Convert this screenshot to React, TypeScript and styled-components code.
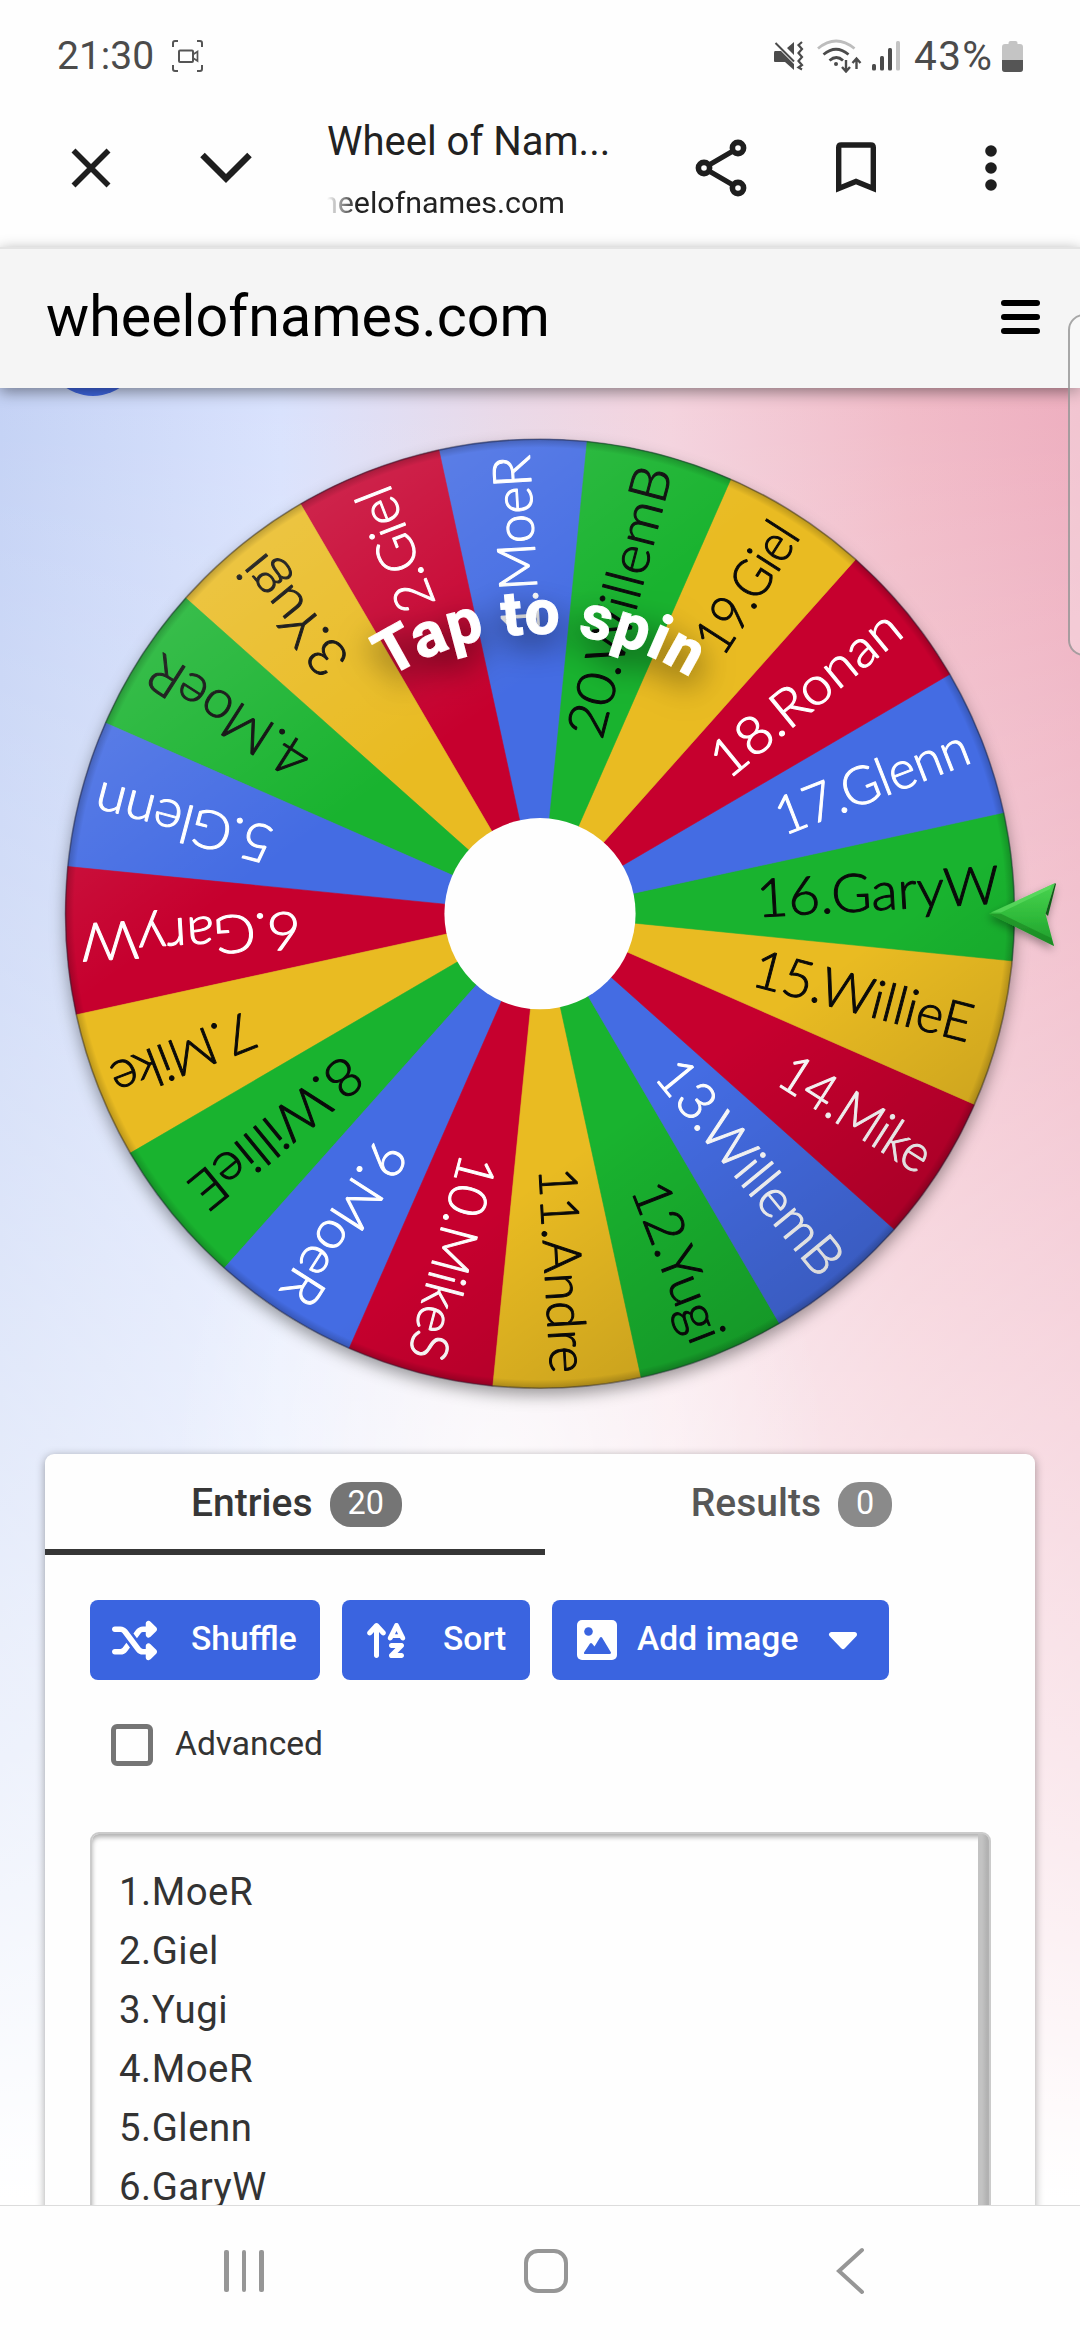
import React from "react";
import styled, { createGlobalStyle } from "styled-components";
import { FaArrowUpAZ, FaShuffle } from "react-icons/fa6";

const GlobalStyle = createGlobalStyle`
  *, *::before, *::after { box-sizing: border-box; }
  body { margin: 0; background: #fdfdfd; font-family: Roboto, "Liberation Sans", sans-serif; }
`;

const Page = styled.div`
  position: relative;
  display: flex;
  flex-direction: column;
  width: 1080px;
  height: 2340px;
  overflow: hidden;
  background: #fefefe;
`;

/* ---------- status bar ---------- */

const StatusBar = styled.div`
  display: flex;
  align-items: center;
  height: 111px;
  padding: 0 56px 0 57px;
  color: #4b4b4b;
`;

const StatusText = styled.span<{ $width: number; $wide?: boolean }>`
  width: ${(p) => p.$width}px;
  font-size: ${(p) => (p.$wide ? 40.5 : 39)}px;
  letter-spacing: ${(p) => (p.$wide ? 1.4 : 0)}px;
  font-weight: 400;
  line-height: 48px;
  white-space: nowrap;
`;

const StatusIcons = styled.div`
  display: flex;
  align-items: center;
  margin-left: auto;
`;

const StatusIcon = styled.svg<{ $left?: number }>`
  display: block;
  flex: none;
  margin-left: ${(p) => p.$left ?? 0}px;
`;

/* ---------- browser toolbar ---------- */

const Toolbar = styled.div`
  display: flex;
  align-items: center;
  height: 136px;
  padding: 0 22px 22px 23px;
`;

const ToolButton = styled.button`
  display: flex;
  align-items: center;
  justify-content: center;
  width: 135px;
  height: 100px;
  padding: 0;
  border: 0;
  background: none;
`;

const PageInfo = styled.div`
  flex: 1;
  display: flex;
  flex-direction: column;
  gap: 19px;
  padding: 3px 0 0 34px;
  color: #222;
  white-space: nowrap;
`;

const PageTitle = styled.div`
  font-size: 40px;
  line-height: 48px;
`;

const PageHost = styled.div`
  width: 270px;
  overflow: hidden;
  font-size: 30.4px;
  line-height: 36px;
  mask-image: linear-gradient(90deg, transparent 0, #000 30px);

  span { margin-left: -6px; }
`;

/* ---------- site header ---------- */

const SiteHeader = styled.header`
  position: relative;
  z-index: 2;
  display: flex;
  align-items: center;
  justify-content: space-between;
  height: 141px;
  padding: 0 40px 3px 46px;
  border-top: 2px solid #e4e4e4;
  background: #f5f5f5;
  box-shadow: 0 4px 14px rgba(0, 0, 0, 0.42);
`;

const SiteName = styled.div`
  font-size: 57.4px;
  line-height: 70px;
  color: #000;
`;

const Burger = styled.div`
  display: flex;
  flex-direction: column;
  gap: 8px;
  width: 39px;

  i { height: 6px; border-radius: 3px; background: #000; }
`;

const EdgeHandle = styled.div`
  position: absolute;
  z-index: 3;
  left: 1068px;
  top: 314px;
  width: 40px;
  height: 342px;
  border: 2px solid rgba(140, 140, 140, 0.75);
  border-radius: 16px;
  background: rgba(255, 255, 255, 0.28);
`;

/* ---------- wheel area ---------- */

const Stage = styled.main`
  position: relative;
  height: 1817px;
  overflow: hidden;
  background:
    radial-gradient(ellipse 330px 420px at 500px 1080px, rgba(255, 255, 255, 0.7), rgba(255, 255, 255, 0) 100%),
    linear-gradient(180deg, rgba(255, 255, 255, 0) 0, rgba(255, 255, 255, 0.24) 500px, rgba(255, 255, 255, 0.54) 1060px, rgba(255, 255, 255, 0.74) 1420px, #fff 1810px),
    linear-gradient(90deg, #c4d2f5 0%, #d9e2fd 26%, #ead9e8 47%, #f4d3de 62%, #f1bbc8 84%, #eeaebf 100%);
`;

const FloatingDot = styled.div`
  position: absolute;
  left: 45px;
  top: -88px;
  width: 96px;
  height: 96px;
  border-radius: 50%;
  background: #3f66e0;
`;

const WheelSvg = styled.svg`
  display: block;
  width: 1080px;
  height: 1066px;
`;

const Label = styled.text`
  font-family: Lato, "Open Sans", sans-serif;
  font-weight: 300;
  font-size: 53px;
`;

const SpinHint = styled.text`
  font-family: Roboto, sans-serif;
  font-weight: 700;
  font-size: 62px;
  fill: #fff;
  stroke: #fff;
  stroke-width: 1px;
`;

/* ---------- entries card ---------- */

const Card = styled.section`
  width: 990px;
  height: 900px;
  margin-left: 45px;
  border-radius: 9px;
  background: #fefefe;
  box-shadow: 0 2px 10px rgba(0, 0, 0, 0.35);
  color: #333;
`;

const Tabs = styled.div`
  display: flex;
`;

const Tab = styled.div<{ $active?: boolean }>`
  display: flex;
  align-items: center;
  justify-content: center;
  gap: 17px;
  width: ${(p) => (p.$active ? 500 : 490)}px;
  height: 101px;
  padding: 5px 0 0 3px;
  border-bottom: 6px solid ${(p) => (p.$active ? "#363636" : "transparent")};
  color: ${(p) => (p.$active ? "#363636" : "#575757")};
  font-size: 39px;
  font-weight: 500;
  line-height: 46px;
`;

const TabName = styled.span`
  padding-bottom: 2px;
`;

const Count = styled.span<{ $dim?: boolean }>`
  height: 45px;
  padding: 0 18px;
  border-radius: 21px;
  background: ${(p) => (p.$dim ? "#8a8a8a" : "#757575")};
  color: #fff;
  font-size: 32.4px;
  font-weight: 400;
  line-height: 42px;
`;

const Actions = styled.div`
  display: flex;
  gap: 22px;
  padding: 45px 0 0 45px;
`;

const ActionButton = styled.button<{ $width: number; $pad: number }>`
  display: flex;
  align-items: center;
  width: ${(p) => p.$width}px;
  height: 80px;
  padding: 0 0 0 ${(p) => p.$pad}px;
  border: 0;
  border-radius: 8px;
  background: #3a64e0;
  color: #fff;
  font: 500 33.6px/40px Roboto, sans-serif;
  white-space: nowrap;

  svg { flex: none; display: block; }
`;

const ActionText = styled.span<{ $left: number }>`
  margin-left: ${(p) => p.$left}px;
  padding-bottom: 3px;
`;

const Caret = styled.svg`
  margin-left: 30px;
`;

const CheckRow = styled.label`
  display: flex;
  align-items: center;
  gap: 22px;
  height: 42px;
  margin: 44px 0 0 66px;
  font-size: 33.6px;
  line-height: 40px;

  span:last-child { padding-bottom: 2px; }
`;

const CheckBox = styled.span`
  width: 42px;
  height: 42px;
  border: 5px solid #757575;
  border-radius: 6px;
`;

const EntryBox = styled.div`
  display: flex;
  justify-content: space-between;
  width: 901px;
  height: 600px;
  margin: 66px 0 0 45px;
  border: 2px solid #cbcbcb;
  border-radius: 9px;
  overflow: hidden;
  box-shadow: inset 0 3px 5px rgba(0, 0, 0, 0.32);
`;

const EntryList = styled.div`
  padding: 28px 0 0 27px;
  font-size: 38.4px;
  line-height: 59px;
  letter-spacing: 0.5px;
`;

const ScrollTrack = styled.div`
  width: 11px;
  background: linear-gradient(90deg, #c3c3c3 0 4px, #b2b2b2 9px);
`;

/* ---------- navigation bar ---------- */

const NavBar = styled.nav`
  position: relative;
  z-index: 4;
  display: flex;
  align-items: center;
  height: 135px;
  padding: 0 0 5px 224px;
  border-top: 1px solid #dcdcdc;
  background: #fefefe;
`;

const Recents = styled.div`
  display: flex;
  justify-content: space-between;
  width: 40px;
  height: 42px;

  i { width: 4.6px; border-radius: 2px; background: #969696; }
`;

const Home = styled.div`
  width: 44px;
  height: 44px;
  margin-left: 260px;
  border: 4px solid #969696;
  border-radius: 14px;
`;

const BackIcon = styled.svg`
  display: block;
  margin-left: 266px;
`;

/* ---------- wheel data ---------- */

const CX = 540;
const CY = 913.7;
const R = 474.5;
const FILLS = ["#446ce3", "#c6002e", "#e9bb22", "#19b32f"];

/* name with the radii at which its label starts and ends */
const ENTRIES: [string, number, number][] = [
  ["1.MoeR", 284, 456],
  ["2.Giel", 330, 454],
  ["3.Yugi", 320, 454],
  ["4.MoeR", 281, 456],
  ["5.Glenn", 279, 456],
  ["6.GaryW", 243, 457],
  ["7.Mike", 311, 456],
  ["8.WillieE", 243, 443],
  ["9.MoeR", 277, 456],
  ["10.MikeS", 253, 457],
  ["11.Andre", 257, 457],
  ["12.Yugi", 293, 456],
  ["13.WillemB", 201, 457],
  ["14.Mike", 292, 456],
  ["15.WillieE", 224, 443],
  ["16.GaryW", 220, 457],
  ["17.Glenn", 258, 456],
  ["18.Ronan", 233, 457],
  ["19.Giel", 317, 456],
  ["20.WillemB", 186, 458],
];

const STEP = 360 / ENTRIES.length;
const FIRST = -93.3;

const point = (deg: number, r: number) => {
  const a = (deg * Math.PI) / 180;
  return `${(CX + r * Math.cos(a)).toFixed(2)} ${(CY + r * Math.sin(a)).toFixed(2)}`;
};

function Wheel() {
  return (
    <WheelSvg viewBox="0 388 1080 1066">
      <defs>
        <linearGradient id="shine" x1="0.2" y1="0.08" x2="0.8" y2="0.92">
          <stop offset="0" stopColor="#fff" stopOpacity="0.15" />
          <stop offset="0.3" stopColor="#fff" stopOpacity="0" />
          <stop offset="0.72" stopColor="#000" stopOpacity="0" />
          <stop offset="1" stopColor="#000" stopOpacity="0.16" />
        </linearGradient>
        <radialGradient id="rim" cx="0.5" cy="0.5" r="0.5">
          <stop offset="0.982" stopColor="#000" stopOpacity="0" />
          <stop offset="1" stopColor="#000" stopOpacity="0.2" />
        </radialGradient>
        <linearGradient id="pin" x1="0" y1="0" x2="0" y2="1">
          <stop offset="0.1" stopColor="#45cf4c" />
          <stop offset="0.55" stopColor="#2fba3a" />
          <stop offset="1" stopColor="#209a2b" />
        </linearGradient>
        <filter id="drop" x="-10%" y="-10%" width="120%" height="120%">
          <feDropShadow dx="0" dy="7" stdDeviation="8" floodColor="#000" floodOpacity="0.38" />
        </filter>
        <filter id="pinDrop" x="-50%" y="-50%" width="200%" height="200%">
          <feDropShadow dx="-1" dy="4" stdDeviation="4" floodColor="#000" floodOpacity="0.35" />
        </filter>
        <filter id="hintDrop" x="-20%" y="-60%" width="140%" height="250%">
          <feDropShadow dx="0" dy="12" stdDeviation="16" floodColor="#000" floodOpacity="0.6" />
        </filter>
        <path id="hintArc" d={`M ${point(-150, 280)} A 280 280 0 0 1 ${point(-30, 280)}`} />
      </defs>

      <circle cx={CX} cy={CY} r={R} fill="#888" filter="url(#drop)" />
      {ENTRIES.map(([name], i) => {
        const mid = FIRST - i * STEP;
        return (
          <path
            key={name}
            d={`M ${CX} ${CY} L ${point(mid - STEP / 2, R)} A ${R} ${R} 0 0 1 ${point(mid + STEP / 2, R)} Z`}
            fill={FILLS[i % 4]}
            stroke={FILLS[i % 4]}
            strokeWidth="0.6"
          />
        );
      })}
      {ENTRIES.map(([name, from, to], i) => (
        <Label
          key={name}
          x={from - 3}
          y={16}
          textLength={to - from + 6}
          lengthAdjust="spacingAndGlyphs"
          fill={i % 4 < 2 ? "#fff" : "#0a0a0a"}
          stroke={i % 4 < 2 ? "#fff" : "#0a0a0a"}
          strokeWidth="1"
          strokeLinejoin="round"
          transform={`translate(${CX} ${CY}) rotate(${FIRST - i * STEP})`}
        >
          {name}
        </Label>
      ))}
      <circle cx={CX} cy={CY} r={R} fill="url(#shine)" />
      <circle cx={CX} cy={CY} r={R} fill="url(#rim)" />
      <circle cx={CX} cy={CY} r={R} fill="none" stroke="#223" strokeOpacity="0.45" strokeWidth="1.6" />
      <circle cx={CX} cy={CY} r="95.6" fill="#fefefe" />

      <g filter="url(#pinDrop)">
        <path d="M989 913.7 L1055 883 L1045.5 913.7 L1054 946 Z" fill="url(#pin)" />
        <path d="M989 913.7 L1054 946 L1051 938 L1001 913.7 Z" fill="#17801f" opacity="0.55" />
        <path d="M1055 883 L1045.5 913.7 L1048 916 L1056 884 Z" fill="#0f5f18" />
        <path d="M991 912.5 L1052 884.5 L1050 889 L1001 912.5 Z" fill="#6be36e" opacity="0.5" />
      </g>

      <SpinHint filter="url(#hintDrop)" textAnchor="middle" textLength="318">
        <textPath href="#hintArc" startOffset="50%">Tap to spin</textPath>
      </SpinHint>
    </WheelSvg>
  );
}

export default function App() {
  return (
    <>
      <GlobalStyle />
      <Page>
        <StatusBar>
          <StatusText $width={97}>21:30</StatusText>
          <StatusIcon $left={18} width="31" height="32" viewBox="0 0 31 32" fill="none" stroke="#555" strokeWidth="2">
            <path d="M1 7V3q0-2 2-2h3M25 1h3q2 0 2 2v4M30 25v4q0 2-2 2h-3M6 31H3q-2 0-2-2v-4" />
            <rect x="7" y="10.5" width="14" height="11.5" rx="1" />
            <path d="M21 14.5l4.500-3v9.500l-4.500-3z" strokeWidth="1.7" />
          </StatusIcon>
          <StatusIcons>
            <StatusIcon width="30" height="31" viewBox="0 0 30 31" fill="#4b4b4b">
              <path d="M1 11h6l13 13v6l-9-8H1q-1 0-1-1v-8q0-2 1-2zM13 8l7-6v13z" />
              <path d="M1.500 3L20 21.500" stroke="#4b4b4b" strokeWidth="2" />
              <path d="M28 2l-3.500 3 3.500 4-3.500 4 3.500 4-3.500 4 3.500 4-3.500 2.500 3.500 2" fill="none" stroke="#4b4b4b" strokeWidth="2.2" />
            </StatusIcon>
            <StatusIcon $left={13} width="46" height="34" viewBox="0 0 46 34" fill="none" stroke="#4b4b4b" strokeWidth="2.8">
              <path d="M1 9.500q18-15 36.500 0" stroke="#bdbdbd" />
              <path d="M6.500 15.500q12.500-10.500 25 0M12.500 21.500q7-6 13.500 0" />
              <circle cx="19" cy="25" r="2" fill="#4b4b4b" stroke="none" />
              <path d="M29 21v11M25 28l4 4.500 4-4.500M39.500 30V20M35.500 24l4-4.500 4 4.500" strokeWidth="2.4" />
            </StatusIcon>
            <StatusIcon $left={9} width="28" height="30" viewBox="0 0 28 30" fill="#4b4b4b">
              <rect x="0" y="23" width="4" height="6.5" rx="1.5" />
              <rect x="8" y="15" width="4" height="14.5" rx="1.5" />
              <rect x="16" y="7" width="4" height="22.5" rx="1.5" />
              <rect x="24" y="0" width="4" height="29.5" rx="1.5" fill="#c4c4c4" />
            </StatusIcon>
            <StatusIcon $left={14} width="0" height="1" />
            <StatusText $width={88} $wide>43%</StatusText>
            <StatusIcon width="22" height="32" viewBox="0 0 22 32">
              <path d="M6.500 3q0-2 2-2h5q2 0 2 2v1H18q3 0 3 3v22q0 3-3 3H3q-3 0-3-3V7q0-3 3-3h3.500z" fill="#c4c4c4" />
              <path d="M0 20h21v9q0 3-3 3H3q-3 0-3-3z" fill="#555" />
            </StatusIcon>
          </StatusIcons>
        </StatusBar>

        <Toolbar>
          <ToolButton>
            <svg width="40" height="42" viewBox="0 0 40 42" stroke="#1e1e1e" strokeWidth="5.6">
              <path d="M2.500 3.500l35 35M37.500 3.500l-35 35" />
            </svg>
          </ToolButton>
          <ToolButton>
            <svg width="52" height="32" viewBox="0 0 52 32" fill="none" stroke="#1e1e1e" strokeWidth="6.4">
              <path d="M2.500 3L26 26.500 49.500 3" />
            </svg>
          </ToolButton>
          <PageInfo>
            <PageTitle>Wheel of Nam...</PageTitle>
            <PageHost>
              <span>heelofnames.com</span>
            </PageHost>
          </PageInfo>
          <ToolButton>
            <svg width="52" height="58" viewBox="0 0 52 58" fill="none" stroke="#1e1e1e" strokeWidth="5.6">
              <circle cx="9" cy="29" r="5.6" />
              <circle cx="43" cy="9" r="5.6" />
              <circle cx="43" cy="49" r="5.6" />
              <path d="M14 26l24-14M14 32l24 14" strokeWidth="5" />
            </svg>
          </ToolButton>
          <ToolButton>
            <svg width="40" height="52" viewBox="0 0 40 52" fill="none" stroke="#1e1e1e" strokeWidth="5.4">
              <path d="M2.700 46.500V5.500q0-2.500 2.500-2.500h29.600q2.500 0 2.500 2.500v41L20 39.500z" />
            </svg>
          </ToolButton>
          <ToolButton>
            <svg width="12" height="46" viewBox="0 0 12 46" fill="#1e1e1e">
              <circle cx="6" cy="6" r="5.8" />
              <circle cx="6" cy="23" r="5.8" />
              <circle cx="6" cy="40" r="5.8" />
            </svg>
          </ToolButton>
        </Toolbar>

        <SiteHeader>
          <SiteName>wheelofnames.com</SiteName>
          <Burger>
            <i />
            <i />
            <i />
          </Burger>
        </SiteHeader>
        <EdgeHandle />

        <Stage>
          <FloatingDot />
          <Wheel />
          <Card>
            <Tabs>
              <Tab $active>
                <TabName>Entries</TabName>
                <Count>20</Count>
              </Tab>
              <Tab>
                <TabName>Results</TabName>
                <Count $dim>0</Count>
              </Tab>
            </Tabs>
            <Actions>
              <ActionButton $width={230} $pad={22}>
                <FaShuffle size={45} />
                <ActionText $left={34}>Shuffle</ActionText>
              </ActionButton>
              <ActionButton $width={188} $pad={22}>
                <FaArrowUpAZ size={45} />
                <ActionText $left={34}>Sort</ActionText>
              </ActionButton>
              <ActionButton $width={337} $pad={25}>
                <svg width="40" height="40" viewBox="0 0 40 40">
                  <rect width="40" height="40" rx="5" fill="#fff" />
                  <circle cx="11.5" cy="11.5" r="4.3" fill="#3a64e0" />
                  <path d="M7 32.500l6-9q1-1 2 0l2.500 3 5.500-9q1-1 2 0l9 15q0 1.500-1.500 1.500H8q-1.500 0-1-1.500z" fill="#3a64e0" />
                </svg>
                <ActionText $left={20}>Add image</ActionText>
                <Caret width="30" height="20" viewBox="0 0 30 20">
                  <path d="M3.500 4.500h23L15 16.500z" fill="#fff" stroke="#fff" strokeWidth="5" strokeLinejoin="round" />
                </Caret>
              </ActionButton>
            </Actions>
            <CheckRow>
              <CheckBox />
              <span>Advanced</span>
            </CheckRow>
            <EntryBox>
              <EntryList>
                {ENTRIES.slice(0, 6).map(([name]) => (
                  <div key={name}>{name}</div>
                ))}
              </EntryList>
              <ScrollTrack />
            </EntryBox>
          </Card>
        </Stage>

        <NavBar>
          <Recents>
            <i />
            <i />
            <i />
          </Recents>
          <Home />
          <BackIcon width="32" height="48" viewBox="0 0 32 48" fill="none" stroke="#969696" strokeWidth="4" strokeLinecap="round">
            <path d="M28 3L5 24l23 21" />
          </BackIcon>
        </NavBar>
      </Page>
    </>
  );
}
